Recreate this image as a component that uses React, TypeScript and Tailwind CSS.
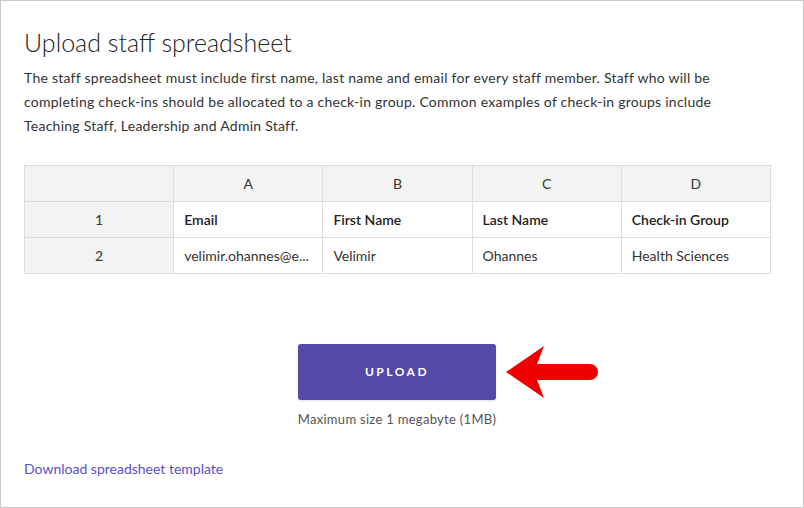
import React from 'react';

const cols = ['A', 'B', 'C', 'D'];
const rows = [
	['Email', 'First Name', 'Last Name', 'Check-in Group'],
	['velimir.ohannes@e...', 'Velimir', 'Ohannes', 'Health Sciences'],
];

export default function App() {
	return (
		<div className="w-[804px] h-[508px] border border-[#c8c8c8] bg-white text-[#333] px-[23px] pt-[26px]" style={{fontFamily: 'Lato, "Noto Sans", sans-serif'}}>
			<h1 className="text-[25px] leading-[30px] text-[#222] font-light">Upload staff spreadsheet</h1>
			<p className="mt-[9px] w-[705px] text-[14px] leading-[24px] tracking-[0.25px] text-[#333]">
				The staff spreadsheet must include first name, last name and email for every staff member. Staff who will be completing check-ins should be allocated to a check-in group. Common examples of check-in groups include Teaching Staff, Leadership and Admin Staff.
			</p>
			<table className="mt-[27px] w-[747px] table-fixed border-collapse text-[14px]">
				<thead>
					<tr className="h-[36px] bg-[#f3f3f3]">
						<th className="border border-[#dcdcdc] font-normal"></th>
						{cols.map((c) => (
							<th key={c} className="border border-[#dcdcdc] font-normal text-center">{c}</th>
						))}
					</tr>
				</thead>
				<tbody>
					{rows.map((r, i) => (
						<tr key={i} className="h-[36px]">
							<td className="border border-[#dcdcdc] bg-[#f3f3f3] text-center">{i + 1}</td>
							{r.map((v, j) => (
								<td key={j} className={'border border-[#dcdcdc] px-[10px] ' + (i === 0 ? 'font-semibold text-[#222]' : '')}>{v}</td>
							))}
						</tr>
					))}
				</tbody>
			</table>
			<div className="mt-[70px] ml-[-10px] flex flex-col items-center">
				<div className="relative">
					<button className="w-[198px] h-[56px] rounded-[3px] bg-[#5549a8] text-white text-[12px] font-bold tracking-[2.5px] shadow-sm">UPLOAD</button>
					<svg className="absolute left-[206px] top-[0px]" width="94" height="56" viewBox="0 0 94 56">
						<path d="M2 28 L40 2 L33 20 L86 20 A8 8 0 0 1 86 36 L33 36 L40 54 Z" fill="#f00000" />
					</svg>
				</div>
				<p className="mt-[10px] text-[13px] tracking-[0.3px] text-[#555]">Maximum size 1 megabyte (1MB)</p>
			</div>
			<a className="block mt-[28px] text-[14px] text-[#5a4fc8]">Download spreadsheet template</a>
		</div>
	);
}
